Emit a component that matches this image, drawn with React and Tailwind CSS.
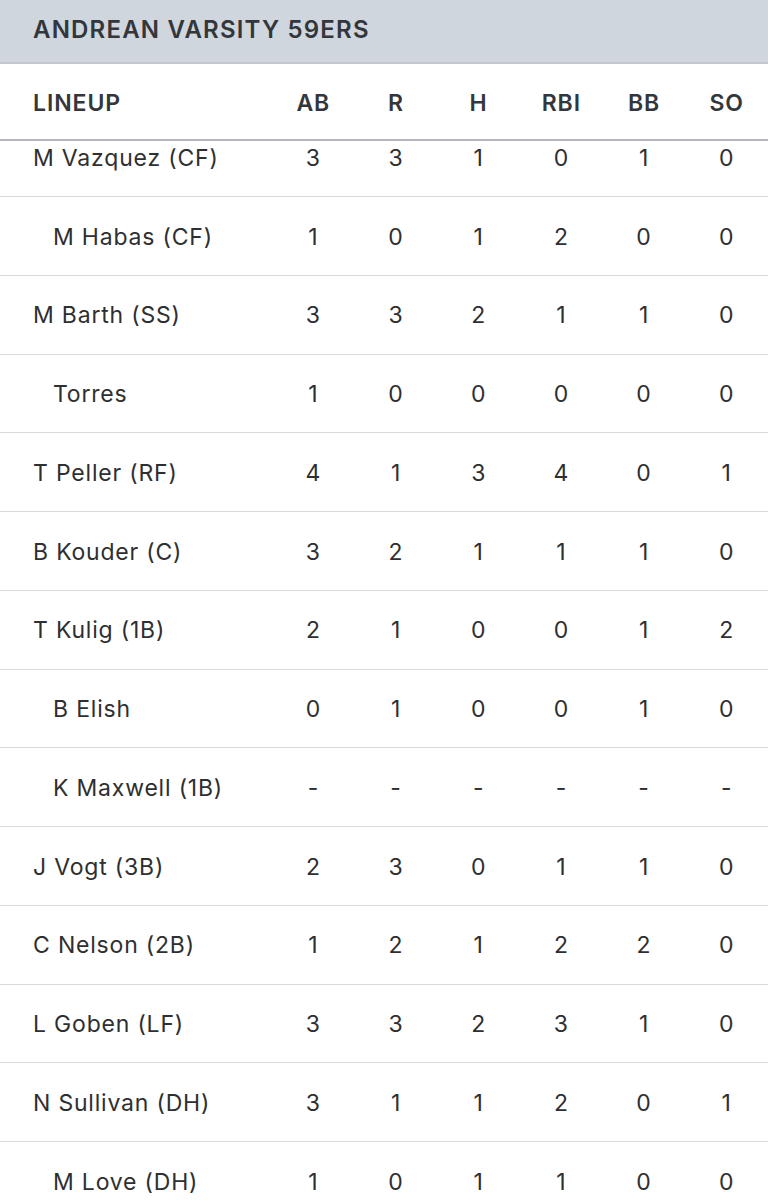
import React from 'react';

const COLUMNS = ['AB', 'R', 'H', 'RBI', 'BB', 'SO'];

const PLAYERS = [
	{ name: 'M Vazquez (CF)', stats: [3, 3, 1, 0, 1, 0] },
	{ name: 'M Habas (CF)', sub: true, stats: [1, 0, 1, 2, 0, 0] },
	{ name: 'M Barth (SS)', stats: [3, 3, 2, 1, 1, 0] },
	{ name: 'Torres', sub: true, stats: [1, 0, 0, 0, 0, 0] },
	{ name: 'T Peller (RF)', stats: [4, 1, 3, 4, 0, 1] },
	{ name: 'B Kouder (C)', stats: [3, 2, 1, 1, 1, 0] },
	{ name: 'T Kulig (1B)', stats: [2, 1, 0, 0, 1, 2] },
	{ name: 'B Elish', sub: true, stats: [0, 1, 0, 0, 1, 0] },
	{ name: 'K Maxwell (1B)', sub: true, stats: ['-', '-', '-', '-', '-', '-'] },
	{ name: 'J Vogt (3B)', stats: [2, 3, 0, 1, 1, 0] },
	{ name: 'C Nelson (2B)', stats: [1, 2, 1, 2, 2, 0] },
	{ name: 'L Goben (LF)', stats: [3, 3, 2, 3, 1, 0] },
	{ name: 'N Sullivan (DH)', stats: [3, 1, 1, 2, 0, 1] },
	{ name: 'M Love (DH)', sub: true, stats: [1, 0, 1, 1, 0, 0] },
];

const App = () => {
	return (
		<div
			className="w-[768px] bg-white text-[#2e2f31] overflow-hidden"
			style={{ fontFamily: 'Inter, "Noto Sans", sans-serif' }}
		>
			{/* team title */}
			<div className="h-[64px] bg-[#d0d6de] border-b-2 border-[#c3c8cf] flex items-center pl-[33px]">
				<span className="text-[24px] font-semibold tracking-[0.05em] text-[#33373c] mt-[-2px]">
					ANDREAN VARSITY 59ERS
				</span>
			</div>

			{/* column headers */}
			<div className="grid grid-cols-[272px_repeat(6,1fr)] h-[77px] pt-[3px] items-center border-b-2 border-[#b4b8bd] text-[23px] font-semibold tracking-[0.04em] text-[#33373c]">
				<div className="pl-[33px]">LINEUP</div>
				{COLUMNS.map((col) => (
					<div key={col} className="text-center">
						{col}
					</div>
				))}
			</div>

			{PLAYERS.map((player, index) => (
				<div
					key={player.name}
					className={`grid grid-cols-[272px_repeat(6,1fr)] items-center border-b border-[#dadada] text-[23px] tracking-[0.035em] ${
						index === 0 ? 'h-[56px] pb-[20px]' : 'h-[78.75px] pt-[2px]'
					}`}
				>
					<div className={player.sub ? 'pl-[53px]' : 'pl-[33px]'}>{player.name}</div>
					{player.stats.map((value, i) => (
						<div key={i} className="text-center">
							{value}
						</div>
					))}
				</div>
			))}
		</div>
	);
};

export default App;
